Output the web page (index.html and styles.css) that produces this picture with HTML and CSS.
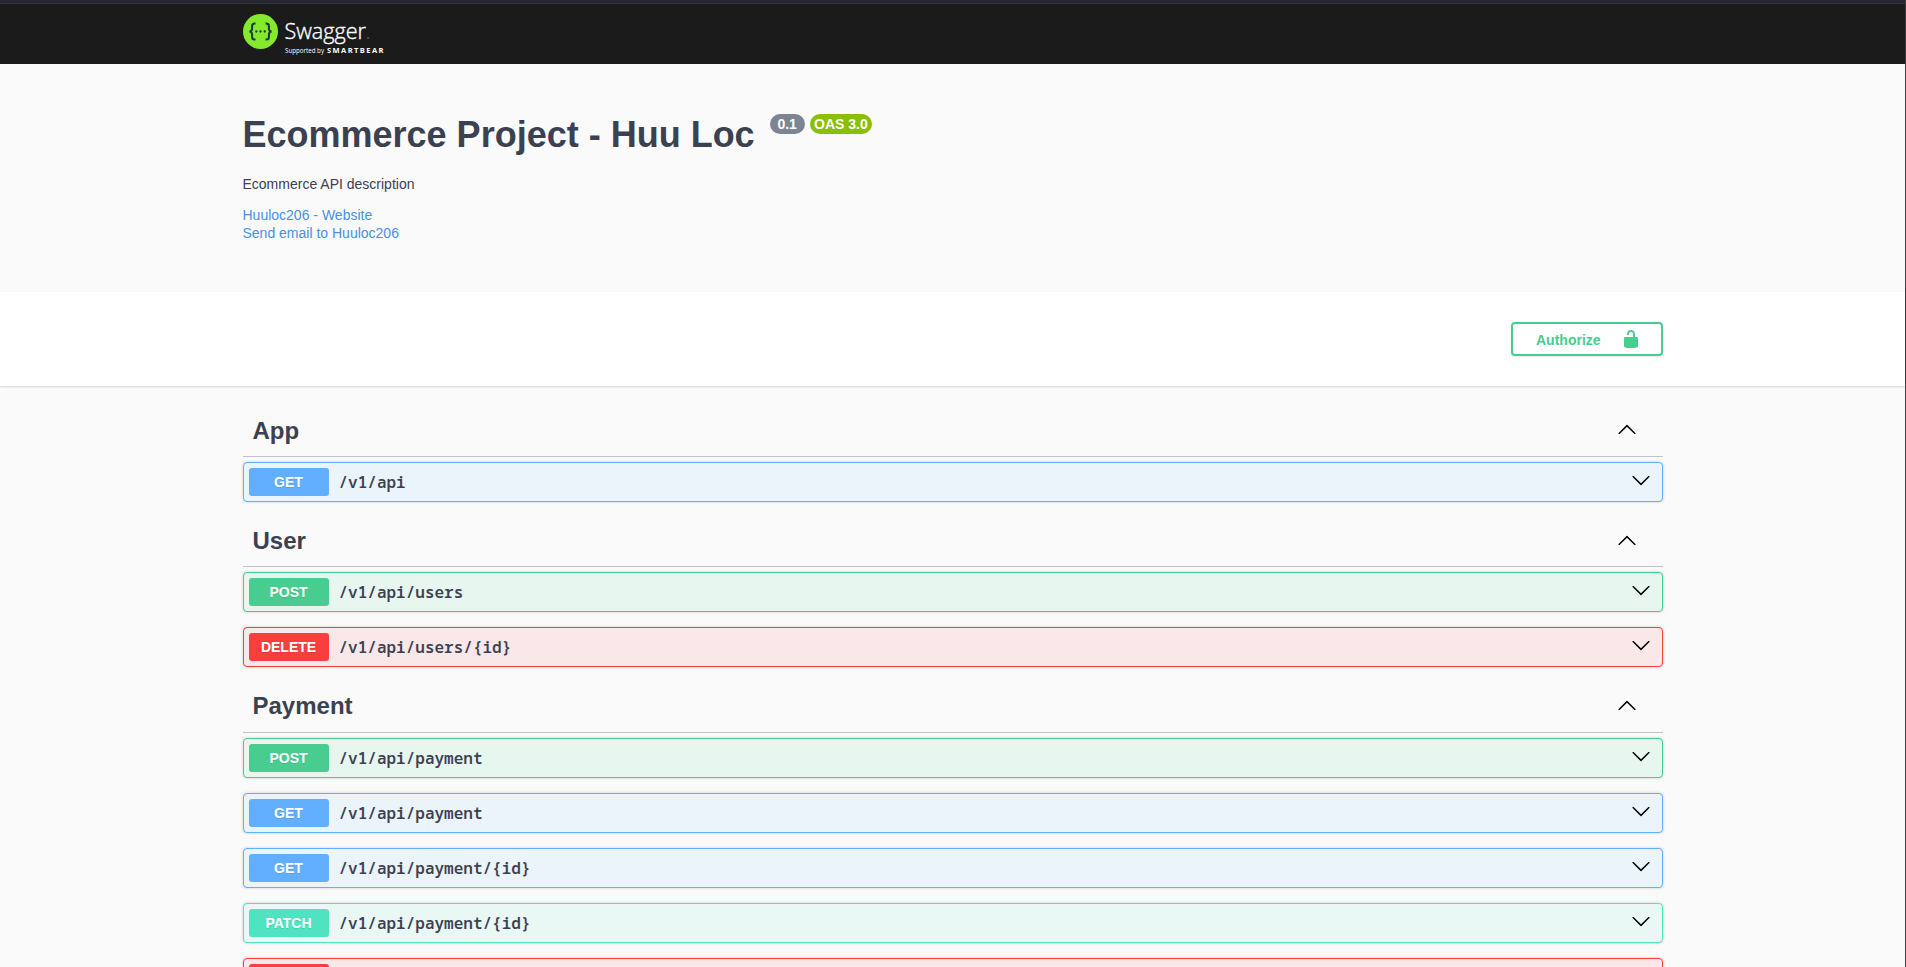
FILE: index.html
```html
<!DOCTYPE html>
<html lang="en">
<head>
<meta charset="utf-8">
<title>Swagger UI</title>
<link rel="stylesheet" href="styles.css">
</head>
<body>
<svg width="0" height="0" class="defs">
  <symbol id="up" viewBox="0 0 20 20"><path d="M17.418 14.908c.272.281.709.281.979 0s.271-.736 0-1.018l-7.908-7.83a.697.697 0 0 0-.979 0L1.6 13.89c-.27.281-.27.736 0 1.018s.709.281.979 0L10 7.767z"/></symbol>
  <symbol id="down" viewBox="0 0 20 20"><path d="M17.418 6.109c.272-.268.709-.268.979 0s.271.701 0 .969l-7.908 7.83a.697.697 0 0 1-.979 0l-7.908-7.83c-.27-.268-.27-.701 0-.969s.709-.268.979 0L10 13.25z"/></symbol>
</svg>
<header class="topbar">
  <div class="wrapper">
    <svg class="logo" width="150" height="50" viewBox="0 0 150 50">
      <circle cx="17.500" cy="19.500" r="17.500" fill="#85ea2d"/>
      <g fill="none" stroke="#173647" stroke-width="2">
        <path d="M12.500 11.500h-1c-1.800 0-2.400 1-2.400 2.500v2.500c0 1.800-.7 2.800-2.600 3 1.900.2 2.600 1.200 2.600 3V25c0 1.500.6 2.500 2.400 2.500h1"/>
        <path d="M22.500 11.500h1c1.800 0 2.400 1 2.400 2.500v2.500c0 1.800.7 2.800 2.600 3-1.900.2-2.600 1.200-2.600 3V25c0 1.500-.6 2.500-2.400 2.500h-1"/>
      </g>
      <g fill="#173647"><circle cx="13.300" cy="19.500" r="1.150"/><circle cx="17.500" cy="19.500" r="1.150"/><circle cx="21.700" cy="19.500" r="1.150"/></g>
      <text class="logo-name" x="41.500" y="26.500" textLength="81.500" lengthAdjust="spacingAndGlyphs">Swagger</text>
      <circle cx="125" cy="26" r=".7" fill="#999"/>
      <text class="logo-sub" x="42" y="40.500" textLength="39" lengthAdjust="spacingAndGlyphs">Supported by</text>
      <text class="logo-brand" x="84" y="40.500" textLength="56.500">SMARTBEAR</text>
    </svg>
  </div>
</header>
<main>
  <section class="info wrapper">
    <h2 class="title">Ecommerce Project - Huu Loc <span class="badges"><small>0.1</small><small class="oas">OAS 3.0</small></span></h2>
    <p class="desc">Ecommerce API description</p>
    <div class="contact"><a>Huuloc206 - Website</a><a>Send email to Huuloc206</a></div>
  </section>
  <section class="schemes">
    <div class="wrapper">
      <button class="authorize"><span>Authorize</span><svg width="20" height="20" viewBox="0 0 20 20"><path d="M15.800 8H14V5.600C14 2.703 12.665 1 10 1 7.334 1 6 2.703 6 5.600V6h2v-.801C8 3.754 8.797 3 10 3s2 .754 2 2.199V8H4c-.553 0-1 .646-1 1.199V17c0 .549.428 1.139.951 1.307l1.197.387C5.672 18.861 6.550 19 7.100 19h5.800c.549 0 1.428-.139 1.951-.307l1.196-.387c.524-.167.953-.757.953-1.306V9.199C17 8.646 16.352 8 15.800 8z"/></svg></button>
    </div>
  </section>
  <div class="wrapper tags">
    <section>
      <h3 class="tag">App<svg><use href="#up"/></svg></h3>
      <div class="op get"><span class="method">GET</span><span class="path">/v1/api</span><svg><use href="#down"/></svg></div>
    </section>
    <section>
      <h3 class="tag">User<svg><use href="#up"/></svg></h3>
      <div class="op post"><span class="method">POST</span><span class="path">/v1/api/users</span><svg><use href="#down"/></svg></div>
      <div class="op delete"><span class="method">DELETE</span><span class="path">/v1/api/users/{id}</span><svg><use href="#down"/></svg></div>
    </section>
    <section>
      <h3 class="tag">Payment<svg><use href="#up"/></svg></h3>
      <div class="op post"><span class="method">POST</span><span class="path">/v1/api/payment</span><svg><use href="#down"/></svg></div>
      <div class="op get"><span class="method">GET</span><span class="path">/v1/api/payment</span><svg><use href="#down"/></svg></div>
      <div class="op get"><span class="method">GET</span><span class="path">/v1/api/payment/{id}</span><svg><use href="#down"/></svg></div>
      <div class="op patch"><span class="method">PATCH</span><span class="path">/v1/api/payment/{id}</span><svg><use href="#down"/></svg></div>
      <div class="op delete"><span class="method"></span></div>
    </section>
  </div>
</main>
</body>
</html>
```
FILE: styles.css
```css
* { box-sizing: border-box; }
html { background: #fafafa; overflow: hidden; }
body {
  margin: 0;
  height: 967px;
  overflow: hidden;
  border-right: 1px solid #3c3c3e;
  background: #fafafa;
  color: #3b4151;
  font-family: "Liberation Sans", Arial, sans-serif;
  font-size: 14px;
}
.defs { position: absolute; }
.wrapper { width: 1420px; margin: 0 auto; }

.topbar {
  height: 64px;
  padding-top: 8px;
  background: #1b1b1b;
  border-top: 3px solid #26262e;
  box-shadow: inset 0 1px #343436;
}
.logo { display: block; margin-top: 1px; }
.logo text { fill: #fff; font-family: "Open Sans", sans-serif; }
.logo .logo-name { font-size: 22px; font-weight: 300; stroke: #fff; stroke-width: .35px; }
.logo .logo-sub { font-size: 6.500px; }
.logo .logo-brand { font-size: 7.500px; font-weight: 700; }

.info { height: 228px; padding-top: 50px; }
.title { display: flex; margin: 0; font-size: 36px; line-height: 41px; }
.badges { display: flex; gap: 5px; margin-left: 15px; }
.badges small {
  height: 20px;
  padding: 0 7.800px;
  border-radius: 20px;
  background: #7d8492;
  color: #fff;
  font-size: 14px;
  line-height: 20px;
}
.badges .oas { padding: 0 4.300px; background: #89bf04; }
.desc { margin: 21px 0 14px; line-height: 16px; }
.contact { display: flex; flex-direction: column; line-height: 18px; color: #4990e2; }

.schemes {
  height: 94px;
  padding-top: 30px;
  background: #fff;
  box-shadow: 0 1px 2px rgba(0, 0, 0, .15);
}
.schemes .wrapper { display: flex; justify-content: flex-end; }
.authorize {
  display: flex;
  align-items: center;
  justify-content: space-between;
  width: 152px;
  height: 34px;
  padding: 0 20px 0 23.500px;
  border: 2px solid #49cc90;
  border-radius: 4px;
  background: transparent;
  box-shadow: 0 1px 2px rgba(0, 0, 0, .1);
  color: #49cc90;
  font: bold 14px "Liberation Sans", Arial, sans-serif;
}
.authorize span { padding-top: 2px; }
.authorize svg { fill: #49cc90; }

.tags { padding-top: 20.600px; }
.tag {
  display: flex;
  align-items: center;
  justify-content: space-between;
  height: 50.400px;
  margin: 0 0 5px;
  padding: 0 26px 1.200px 10px;
  border-bottom: 1px solid rgba(59, 65, 81, .3);
  font-size: 24px;
}
.tag svg, .op svg { width: 20px; height: 20px; }
.tag svg { margin-bottom: 2.800px; }
.op {
  display: flex;
  align-items: center;
  height: 40px;
  margin-bottom: 15px;
  padding: 5px 11px 5px 5px;
  border: 1px solid var(--tone);
  border-radius: 4px;
  background: var(--wash);
  box-shadow: 0 0 3px rgba(0, 0, 0, .19);
}
.op svg { margin: 0 0 4.400px auto; }
.method {
  width: 80px;
  height: 28px;
  border-radius: 3px;
  background: var(--tone);
  color: #fff;
  font-weight: 700;
  line-height: 28px;
  text-align: center;
  text-shadow: 0 1px 0 rgba(0, 0, 0, .1);
}
.path {
  padding: 0 10px;
  font-family: "Noto Sans Mono", "DejaVu Sans Mono", monospace;
  font-size: 16px;
  font-weight: 600;
}
.get { --tone: #61affe; --wash: #ebf3fb; }
.post { --tone: #49cc90; --wash: #e8f6f0; }
.delete { --tone: #f93e3e; --wash: #fae7e7; }
.patch { --tone: #50e3c2; --wash: #e9f8f5; }
```
